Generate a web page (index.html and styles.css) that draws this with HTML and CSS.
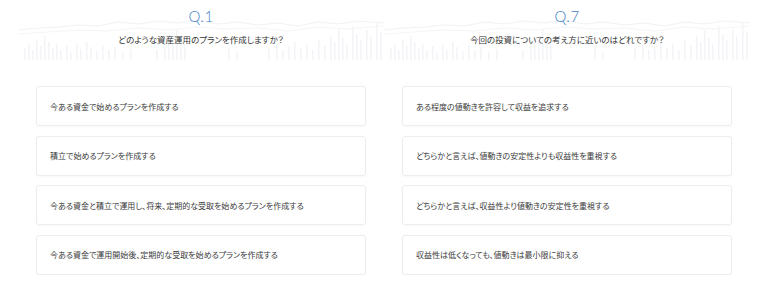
FILE: index.html
```html
<!DOCTYPE html>
<html lang="ja">
    <head>
        <meta charset="UTF-8" />
        <meta name="viewport" content="width=device-width, initial-scale=1.0" />
        <title>プラン作成</title>
        <link rel="stylesheet" href="styles.css">
    </head>

    <body>
        <!-- faint chart drawn behind each question heading -->
        <svg class="defs" width="0" height="0" aria-hidden="true">
            <symbol id="chart" viewBox="0 0 366 60" preserveAspectRatio="none">
                <polyline fill="none" stroke="#f0f2f5" stroke-width="1"
                    points="0,30 20,28 40,27 60,25 80,26 100,22 120,24 140,21 160,23 180,20 200,24 220,22 240,25 260,23 280,26 300,22 320,24 340,21 366,23" />
                <polyline fill="none" stroke="#f4f5f7" stroke-width="1"
                    points="0,34 30,32 60,30 90,31 120,28 150,30 180,27 210,29 240,28 270,31 300,27 330,29 366,26" />
                <g fill="#f2f4f7">
                    <rect x="6" y="48" width="1.5" height="12" />
                    <rect x="10" y="44" width="1.5" height="16" />
                    <rect x="14" y="50" width="1.5" height="10" />
                    <rect x="18" y="40" width="1.5" height="20" />
                    <rect x="22" y="46" width="1.5" height="14" />
                    <rect x="26" y="36" width="1.5" height="24" />
                    <rect x="30" y="42" width="1.5" height="18" />
                    <rect x="34" y="48" width="1.5" height="12" />
                    <rect x="38" y="44" width="1.5" height="16" />
                    <rect x="42" y="50" width="1.5" height="10" />
                    <rect x="48" y="46" width="1.5" height="14" />
                    <rect x="52" y="52" width="1.5" height="8" />
                    <rect x="58" y="44" width="1.5" height="16" />
                    <rect x="62" y="49" width="1.5" height="11" />
                    <rect x="68" y="42" width="1.5" height="18" />
                    <rect x="72" y="47" width="1.5" height="13" />
                    <rect x="78" y="51" width="1.5" height="9" />
                    <rect x="84" y="45" width="1.5" height="15" />
                    <rect x="90" y="50" width="1.5" height="10" />
                    <rect x="96" y="47" width="1.5" height="13" />
                    <rect x="104" y="52" width="1.5" height="8" />
                    <rect x="112" y="49" width="1.5" height="11" />
                    <rect x="138" y="50" width="1.5" height="10" />
                    <rect x="146" y="44" width="1.5" height="16" />
                    <rect x="150" y="36" width="1.5" height="24" />
                    <rect x="154" y="40" width="1.5" height="20" />
                    <rect x="158" y="30" width="1.5" height="30" />
                    <rect x="162" y="38" width="1.5" height="22" />
                    <rect x="166" y="44" width="1.5" height="16" />
                    <rect x="210" y="48" width="1.5" height="12" />
                    <rect x="218" y="52" width="1.5" height="8" />
                    <rect x="250" y="48" width="1.5" height="12" />
                    <rect x="258" y="44" width="1.5" height="16" />
                    <rect x="264" y="50" width="1.5" height="10" />
                    <rect x="270" y="46" width="1.5" height="14" />
                    <rect x="276" y="42" width="1.5" height="18" />
                    <rect x="282" y="48" width="1.5" height="12" />
                    <rect x="288" y="44" width="1.5" height="16" />
                    <rect x="294" y="50" width="1.5" height="10" />
                    <rect x="300" y="40" width="1.5" height="20" />
                    <rect x="306" y="46" width="1.5" height="14" />
                    <rect x="312" y="36" width="1.5" height="24" />
                    <rect x="316" y="42" width="1.5" height="18" />
                    <rect x="320" y="30" width="1.5" height="30" />
                    <rect x="324" y="38" width="1.5" height="22" />
                    <rect x="328" y="44" width="1.5" height="16" />
                    <rect x="334" y="26" width="1.5" height="34" />
                    <rect x="338" y="34" width="1.5" height="26" />
                    <rect x="342" y="40" width="1.5" height="20" />
                    <rect x="348" y="30" width="1.5" height="30" />
                    <rect x="352" y="36" width="1.5" height="24" />
                    <rect x="358" y="22" width="1.5" height="38" />
                    <rect x="362" y="32" width="1.5" height="28" />
                </g>
            </symbol>
        </svg>

        <div class="page">
            <section class="question">
                <div class="question__head">
                    <svg class="question__chart" aria-hidden="true"><use href="#chart" /></svg>
                    <h2 class="question__num">Q.1</h2>
                    <p class="question__text">どのような資産運用のプランを作成しますか？</p>
                </div>
                <ul class="options">
                    <li class="option">今ある資金で始めるプランを作成する</li>
                    <li class="option">積立で始めるプランを作成する</li>
                    <li class="option">今ある資金と積立で運用し、将来、定期的な受取を始めるプランを作成する</li>
                    <li class="option">今ある資金で運用開始後、定期的な受取を始めるプランを作成する</li>
                </ul>
            </section>

            <section class="question">
                <div class="question__head">
                    <svg class="question__chart" aria-hidden="true"><use href="#chart" /></svg>
                    <h2 class="question__num">Q.7</h2>
                    <p class="question__text">今回の投資についての考え方に近いのはどれですか？</p>
                </div>
                <ul class="options">
                    <li class="option">ある程度の値動きを許容して収益を追求する</li>
                    <li class="option">どちらかと言えば、値動きの安定性よりも収益性を重視する</li>
                    <li class="option">どちらかと言えば、収益性より値動きの安定性を重視する</li>
                    <li class="option">収益性は低くなっても、値動きは最小限に抑える</li>
                </ul>
            </section>
        </div>
    </body>
</html>
```

FILE: styles.css
```css
/* CSS Reset */
html {
    box-sizing: border-box;
    font-size: 16px;
}

*,
*:before,
*:after {
    box-sizing: inherit;
}

body,
h1,
h2,
p,
ul {
    margin: 0;
    padding: 0;
    font-weight: normal;
}

ul {
    list-style: none;
}

body {
    background: #fff;
    color: #333;
    font-family: "Noto Sans CJK JP", "Noto Sans", sans-serif;
    font-feature-settings: "palt";
}

.defs {
    position: absolute;
    width: 0;
    height: 0;
}

.page {
    display: grid;
    grid-template-columns: 1fr 1fr;
    padding: 0 18px;
}

.question__head {
    position: relative;
    height: 60px;
    text-align: center;
}

.question__chart {
    position: absolute;
    left: 0;
    top: 0;
    width: 100%;
    height: 60px;
    z-index: -1;
}

.question__num {
    padding-top: 7px;
    font-family: Lato, "Noto Sans", sans-serif;
    font-weight: 300;
    font-size: 15px;
    line-height: 18px;
    color: #3f7fc6;
    letter-spacing: 0.5px;
}

.question__text {
    margin-top: 7px;
    font-size: 8.5px;
    line-height: 14px;
    color: #333;
}

.options {
    display: flex;
    flex-direction: column;
    gap: 9.5px;
    padding: 26px 18px 0;
}

.option {
    display: flex;
    align-items: center;
    height: 40px;
    padding-left: 13px;
    border: 1px solid #ebedef;
    border-radius: 3px;
    box-shadow: 0 1px 2px rgba(0, 0, 0, 0.03);
    font-size: 8px;
    color: #3a3a3a;
}
```
